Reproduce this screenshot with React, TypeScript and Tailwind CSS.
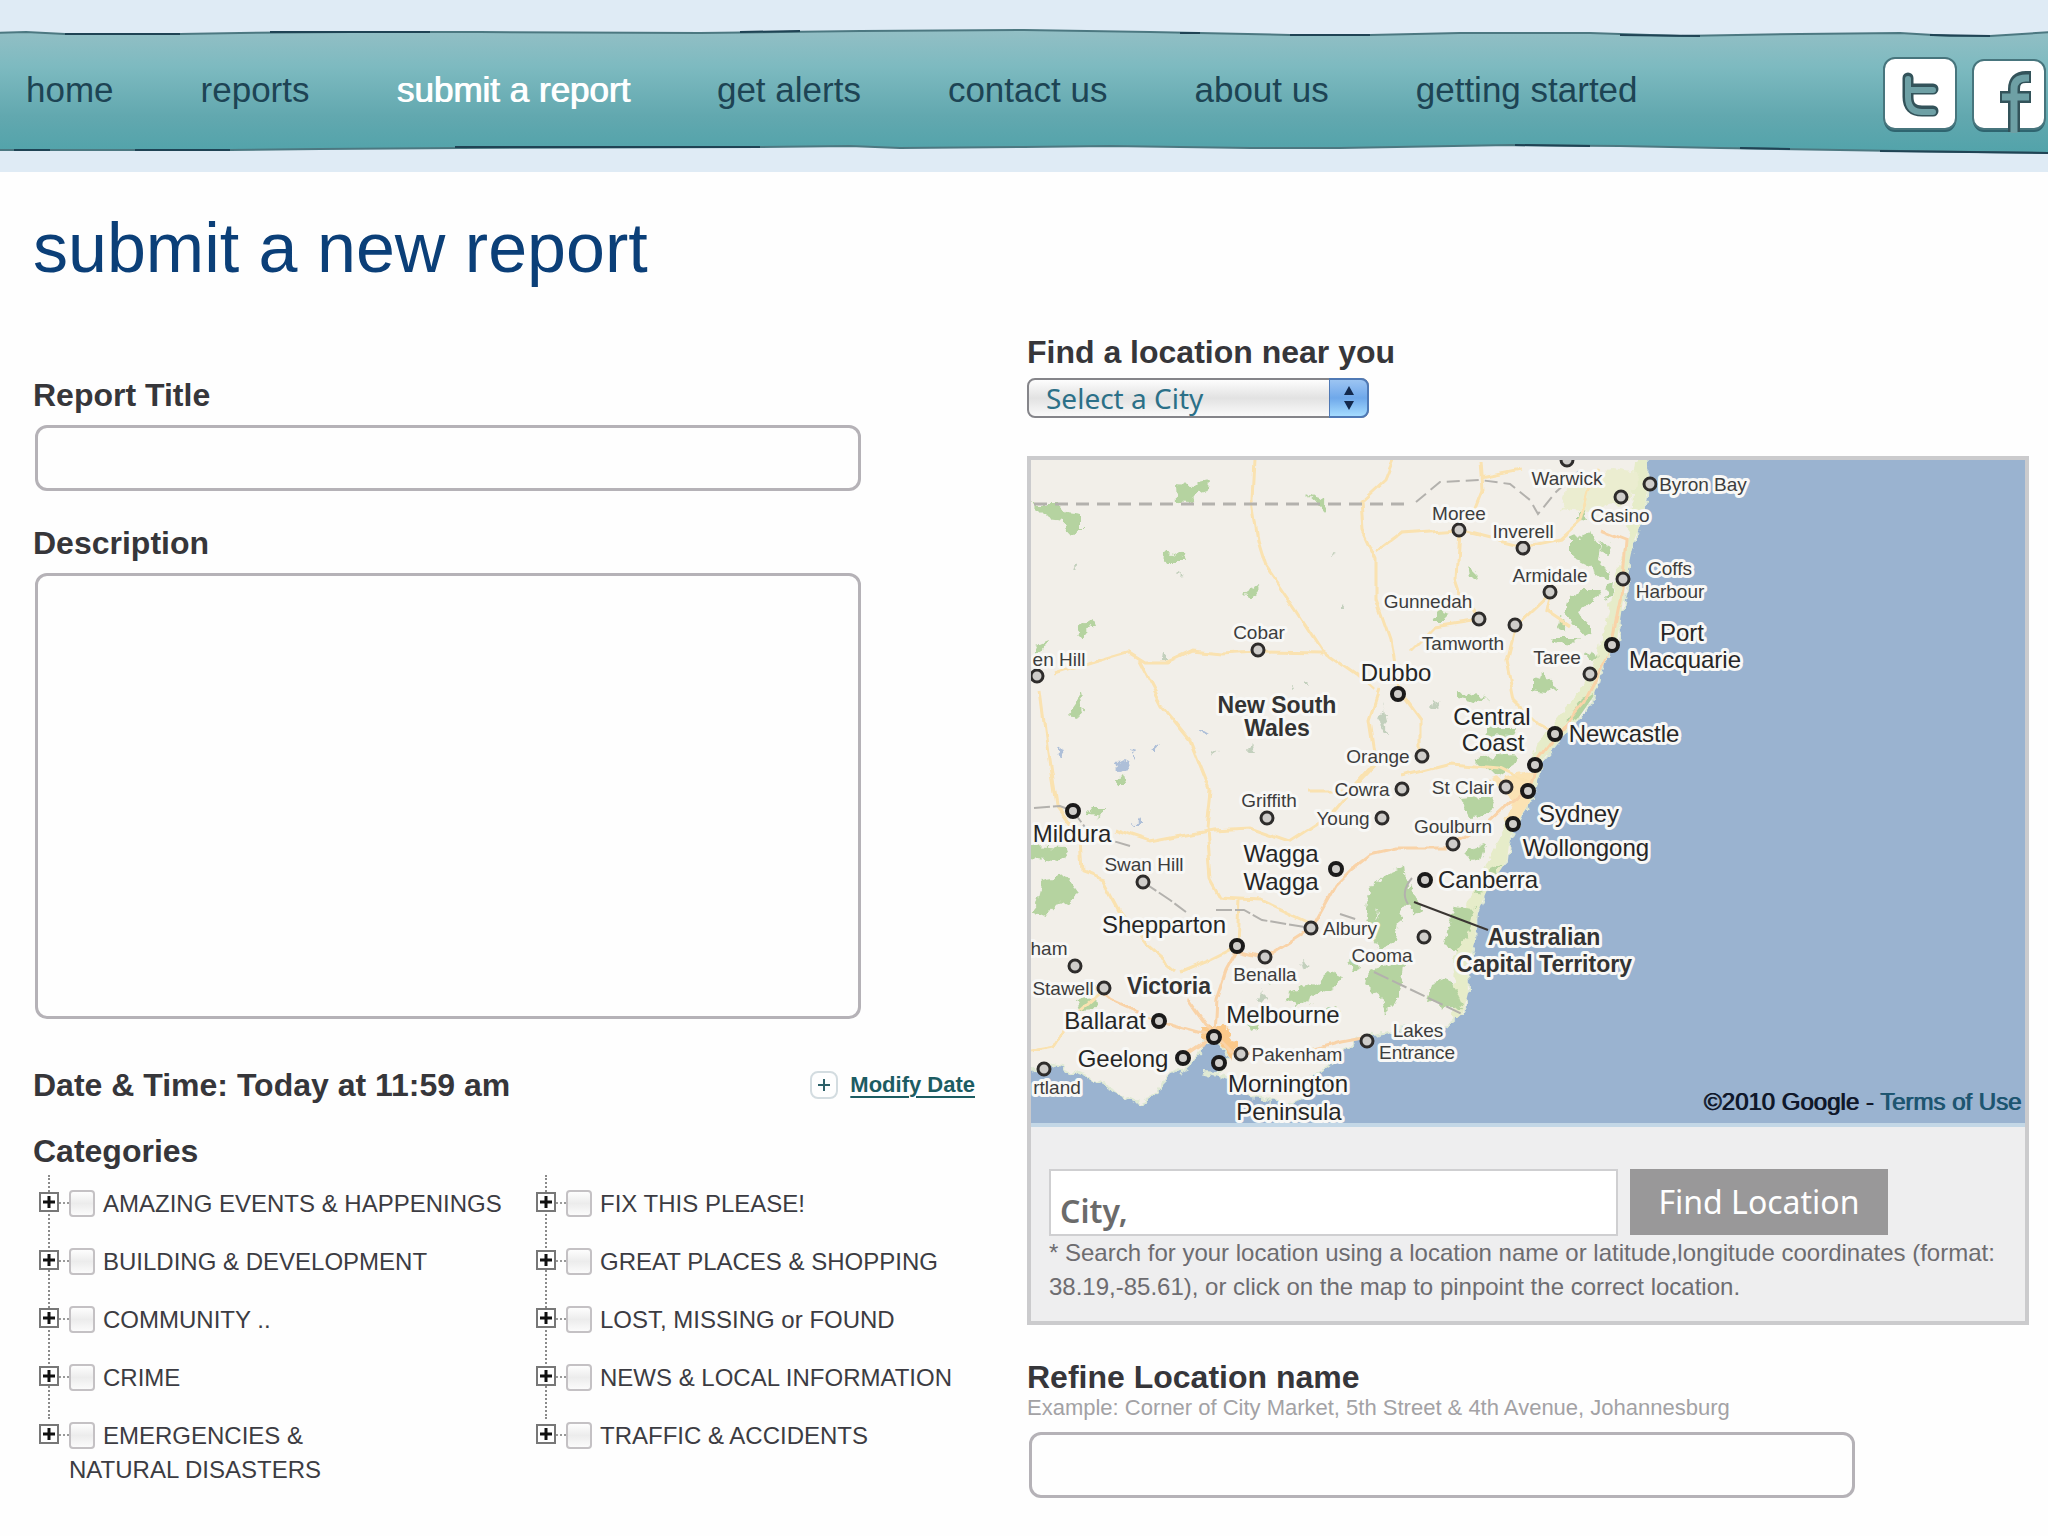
import { useState } from "react";

const NAV_ITEMS = [
  "home",
  "reports",
  "submit a report",
  "get alerts",
  "contact us",
  "about us",
  "getting started",
];

const CATEGORIES = [
  [
    "AMAZING EVENTS & HAPPENINGS",
    "BUILDING & DEVELOPMENT",
    "COMMUNITY ..",
    "CRIME",
    "EMERGENCIES &\nNATURAL DISASTERS",
  ],
  [
    "FIX THIS PLEASE!",
    "GREAT PLACES & SHOPPING",
    "LOST, MISSING or FOUND",
    "NEWS & LOCAL INFORMATION",
    "TRAFFIC & ACCIDENTS",
  ],
];

type Place = [name: string, x: number, y: number];

const TOWNS: Place[] = [
  ["Warwick", 1567, 485],
  ["Casino", 1620, 522],
  ["Byron Bay", 1703, 491],
  ["Moree", 1459, 520],
  ["Inverell", 1523, 538],
  ["Coffs", 1670, 575],
  ["Harbour", 1670, 598],
  ["Armidale", 1550, 582],
  ["Gunnedah", 1428, 608],
  ["Tamworth", 1463, 650],
  ["Taree", 1557, 664],
  ["Cobar", 1259, 639],
  ["en Hill", 1059, 666],
  ["Orange", 1378, 763],
  ["St Clair", 1463, 794],
  ["Cowra", 1362, 796],
  ["Griffith", 1269, 807],
  ["Young", 1343, 825],
  ["Goulburn", 1453, 833],
  ["Swan Hill", 1144, 871],
  ["Albury", 1350, 935],
  ["Cooma", 1382, 962],
  ["ham", 1049, 955],
  ["Benalla", 1265, 981],
  ["Stawell", 1063, 995],
  ["Pakenham", 1297, 1061],
  ["Lakes", 1418, 1037],
  ["Entrance", 1417, 1059],
  ["rtland", 1057, 1094],
];

const CITIES: Place[] = [
  ["Port", 1682, 641],
  ["Macquarie", 1685, 668],
  ["Dubbo", 1396, 681],
  ["Central", 1492, 725],
  ["Coast", 1493, 751],
  ["Newcastle", 1624, 742],
  ["Sydney", 1579, 822],
  ["Wollongong", 1586, 856],
  ["Mildura", 1072, 842],
  ["Wagga", 1281, 862],
  ["Wagga", 1281, 890],
  ["Canberra", 1488, 888],
  ["Shepparton", 1164, 933],
  ["Ballarat", 1105, 1029],
  ["Melbourne", 1283, 1023],
  ["Geelong", 1123, 1067],
  ["Mornington", 1288, 1092],
  ["Peninsula", 1289, 1120],
];

const STATES: Place[] = [
  ["New South", 1277, 713],
  ["Wales", 1277, 736],
  ["Australian", 1544, 945],
  ["Capital Territory", 1544, 972],
  ["Victoria", 1169, 994],
];

const TOWN_DOTS = [
  [1567, 460], [1621, 497], [1650, 484], [1459, 530], [1523, 548], [1623, 579],
  [1550, 592], [1479, 619], [1515, 625], [1590, 674], [1258, 650], [1037, 676],
  [1422, 756], [1402, 789], [1506, 787], [1382, 818], [1267, 818], [1453, 844],
  [1143, 882], [1311, 928], [1424, 937], [1075, 966], [1265, 957], [1104, 988],
  [1367, 1041], [1241, 1054], [1044, 1069],
];

const CITY_DOTS = [
  [1612, 645], [1398, 694], [1555, 734], [1535, 765], [1528, 791], [1513, 824],
  [1073, 811], [1336, 869], [1425, 880], [1237, 946], [1159, 1021], [1214, 1037],
  [1183, 1058], [1219, 1063],
];

const COAST =
  "M1020 450H1646L1648 483L1643 517L1633 543L1627 573L1622 607L1617 640L1602 667L1593 697L1577 720L1560 740L1542 760L1533 797L1523 812L1510 837L1507 860L1487 890L1477 913L1475 940L1467 967L1468 993L1463 1013L1447 1027L1410 1029L1367 1037L1353 1043L1333 1063L1310 1080L1306 1098L1287 1103L1253 1097L1233 1080L1203 1072L1220 1073L1228 1057L1217 1040L1207 1043L1200 1053L1187 1067L1163 1080L1157 1093L1140 1103L1120 1093L1087 1077L1063 1068L1047 1063L1020 1073Z";

const PARKS = [
  "M1031 503L1060 503L1066 512L1080 514L1080 532L1066 531L1062 520L1046 518Z",
  "M1175 485L1196 486L1200 482L1209 480L1208 488L1198 491L1190 503L1176 502Z",
  "M1160 551L1183 555L1186 563L1170 563Z",
  "M1244 594L1256 586L1257 592L1248 598Z",
  "M1307 494L1324 500L1325 512L1318 504Z",
  "M1076 629L1092 619L1094 624L1083 638Z",
  "M1036 646L1048 641L1046 646L1036 652Z",
  "M1066 716L1080 696L1084 712L1070 718Z",
  "M1116 778L1124 776L1126 785L1117 785Z",
  "M1031 845L1065 847L1067 856L1052 861L1031 858Z",
  "M1042 880L1066 876L1078 893L1068 902L1056 905L1046 917L1034 912Z",
  "M1088 808L1106 808L1104 818L1090 816Z",
  "M1076 1000L1096 998L1098 1008L1080 1009Z",
  "M1572 540L1590 532L1600 545L1598 562L1612 570L1606 580L1588 566L1572 558Z",
  "M1584 590L1600 590L1592 604L1580 612L1586 622L1594 632L1584 638L1576 628L1564 614L1568 600Z",
  "M1552 638L1580 638L1572 646L1558 644Z",
  "M1532 680L1544 672L1548 682L1560 690L1546 692L1532 690Z",
  "M1460 692L1490 700L1478 702L1460 698Z",
  "M1582 700L1594 692L1590 708L1578 716L1566 722Z",
  "M1438 610L1450 614L1444 620L1432 620Z",
  "M1468 565L1478 575L1476 582L1470 576Z",
  "M1484 728L1516 728L1512 736L1486 735Z",
  "M1472 760L1498 754L1518 756L1514 766L1498 776L1480 768Z",
  "M1460 799L1494 796L1490 814L1468 815Z",
  "M1464 850L1486 842L1482 862L1470 864Z",
  "M1382 875L1404 866L1406 884L1418 902L1402 908L1396 940L1382 950L1372 936L1378 912L1366 894Z",
  "M1406 890L1412 884L1424 914L1412 910Z",
  "M1456 906L1476 908L1470 930L1456 952L1444 944L1448 926Z",
  "M1368 972L1404 960L1402 986L1396 1002L1384 1014L1380 994L1366 984Z",
  "M1288 990L1316 984L1330 972L1342 978L1334 988L1314 996L1300 1006L1286 1000Z",
  "M1432 984L1448 978L1456 990L1462 1006L1444 1008L1428 1000Z",
  "M1370 890L1380 884L1374 932L1366 918Z",
  "M1488 870L1504 862L1484 894L1476 892Z",
  "M1578 514L1584 510L1586 522L1578 520Z",
  "M1602 540L1610 544L1608 554L1600 550Z",
  "M1606 588L1614 584L1612 596L1604 598Z",
  "M1560 620L1568 624L1566 632L1558 628Z",
  "M1590 650L1600 656L1594 660L1586 656Z",
  "M1326 1008L1336 1004L1342 1012L1330 1016Z",
  "M1258 976L1266 974L1270 984L1260 986Z",
  "M1350 964L1358 958L1362 968L1352 972Z",
  "M1246 1024L1256 1022L1258 1030L1248 1032Z",
];

const ROADS =
  "M1254 460L1252 500L1258 540L1266 566L1296 610L1322 650L1356 674L1374 690" +
  "M1056 674L1090 663L1128 652L1144 662L1168 662L1192 651L1222 654L1258 652L1322 653" +
  "M1138 660L1162 706L1190 740L1210 790L1206 828L1210 880L1220 898L1240 900L1238 946L1210 960L1180 972" +
  "M1040 690L1048 754L1056 806L1080 838L1082 872L1104 880L1120 910L1146 944L1176 970" +
  "M1114 830L1150 842L1212 830L1250 828L1290 842L1330 816L1350 792L1380 760" +
  "M1220 898L1260 900L1311 924M1031 1050L1054 1046L1070 1020L1104 990" +
  "M1392 460L1384 480L1360 502L1362 530L1376 560L1376 600L1390 640L1398 690L1420 720L1420 756" +
  "M1376 552L1400 534L1430 532L1459 530L1456 580L1460 592L1479 619L1434 626L1410 650" +
  "M1459 530L1523 546L1560 538L1580 520L1588 490L1600 470M1480 460L1482 490L1470 520M1480 478L1520 470" +
  "M1515 625L1550 592L1546 610L1570 626M1515 625L1506 660L1514 700L1540 726L1555 734" +
  "M1380 690L1370 720L1376 760L1350 790L1310 790M1402 776L1450 764L1500 768L1528 782";

const FREEWAYS =
  "M1214 1037L1216 1000L1226 970L1237 950L1265 957L1311 928L1334 886L1352 868L1370 854L1396 848L1446 848L1490 822L1514 800L1528 790L1538 760L1556 736L1584 702L1610 650L1622 590L1626 540L1600 530" +
  "M1214 1037L1160 1022L1110 1000L1090 984M1214 1037L1186 998M1214 1037L1183 1058M1220 1040L1232 1052L1290 1056L1340 1042L1367 1037";

function BrushedBand() {
  return (
    <svg
      className="absolute inset-0 h-full w-full"
      viewBox="0 0 2048 172"
      preserveAspectRatio="none"
      aria-hidden="true"
    >
      <defs>
        <linearGradient id="band" x1="0" y1="0" x2="0" y2="1">
          <stop offset="0" stopColor="#93bfc5" />
          <stop offset="0.3" stopColor="#7dbac0" />
          <stop offset="0.7" stopColor="#62a8af" />
          <stop offset="1" stopColor="#52a3aa" />
        </linearGradient>
      </defs>
      <path
        d="M-4 33L26 32L65 34L180 34L240 33L350 32L480 32L700 33L860 31L1024 30L1150 32L1290 35L1370 35L1460 33L1590 33L1680 36L1800 34L1900 33L1950 36L1990 36L2052 32V153L1900 151L1720 148L1620 146L1510 145L1340 148L1250 148L1110 146L1024 147L900 148L850 146L760 147L460 148L320 149L230 150L-4 150Z"
        fill="url(#band)"
        stroke="#4c7881"
        strokeWidth="2"
      />
      <path
        d="M65 34L180 34M270 32L430 32M740 32L800 31M1180 33L1200 33M1290 35L1370 35M1620 35L1700 36M1930 35L1990 36M14 150L50 150M135 150L230 150M455 147L760 147M1515 145L1590 146M1740 148L1790 149M1880 151L2048 153"
        fill="none"
        stroke="#1f4354"
        strokeWidth="2"
      />
    </svg>
  );
}

function TwitterIcon() {
  return (
    <svg className="h-[78px] w-[76px]" viewBox="0 0 76 78" aria-hidden="true">
      <rect x="2" y="5" width="72" height="72" rx="11" fill="#2f6570" />
      <rect x="2" y="3" width="72" height="71" rx="11" fill="#fff" stroke="#47757d" strokeWidth="2" />
      <g fill="none" strokeLinecap="round">
        <path d="M26 23V42Q26 56 40 56H51M26 34H51" stroke="#33535a" strokeWidth="11" />
        <path d="M26 24V42Q26 57 40 57H51M26 35H51" stroke="#6ea0a5" strokeWidth="6" />
      </g>
    </svg>
  );
}

function FacebookIcon() {
  return (
    <svg className="h-[78px] w-[76px]" viewBox="0 0 76 78" aria-hidden="true">
      <rect x="2" y="7" width="72" height="70" rx="11" fill="#2f6570" />
      <rect x="2" y="5" width="72" height="69" rx="11" fill="#fff" stroke="#47757d" strokeWidth="2" />
      <g fill="none">
        <path d="M43 77V34Q43 22 55 22H60M29 42H60" stroke="#33535a" strokeWidth="12" />
        <path d="M43 78V34Q43 23 55 23H58M31 42H58" stroke="#6ea0a5" strokeWidth="7" />
      </g>
    </svg>
  );
}

function PlaceLabels({ places, className }: { places: Place[]; className: string }) {
  return (
    <g className={className}>
      {places.map(([name, x, y]) => (
        <text key={`${name}-${y}`} x={x} y={y} textAnchor="middle">
          {name}
        </text>
      ))}
    </g>
  );
}

function RegionMap() {
  return (
    <div className="relative">
      <svg
        className="block h-auto w-full bg-[#9ab3d0]"
        viewBox="1031 460 994 667"
        role="img"
        aria-label="Map of New South Wales"
      >
        <defs>
          <filter id="ragged" x="-5%" y="-5%" width="110%" height="110%">
            <feTurbulence type="fractalNoise" baseFrequency="0.09" numOctaves="3" seed="4" />
            <feDisplacementMap in="SourceGraphic" scale="13" xChannelSelector="R" yChannelSelector="G" />
          </filter>
          <filter id="bend" x="-5%" y="-5%" width="110%" height="110%">
            <feTurbulence type="fractalNoise" baseFrequency="0.04" numOctaves="2" seed="9" />
            <feDisplacementMap in="SourceGraphic" scale="9" xChannelSelector="R" yChannelSelector="G" />
          </filter>
          <clipPath id="land">
            <path d={COAST} />
          </clipPath>
        </defs>

        <path d={COAST} fill="#f2efe9" stroke="#dfe9d4" strokeWidth="2" filter="url(#ragged)" />
        <g clipPath="url(#land)">
          <g filter="url(#ragged)">
            <path
              d="M1646 460L1640 530L1622 600L1606 660L1586 700L1545 750L1528 800L1505 850L1480 900L1464 960L1462 1020"
              fill="none"
              stroke="#e6ecc9"
              strokeWidth="20"
            />
            <path d="M1570 480L1610 470L1640 474L1630 500L1590 512L1560 508Z" fill="#ebedd0" />
            <path d={PARKS.join("")} fill="#b5d3a0" />
            <path
              d="M1118 764L1126 760L1128 770L1120 772ZM1130 750L1137 752L1134 756ZM1148 752L1160 744L1156 752ZM1198 728L1208 734L1204 736ZM1055 746L1066 750L1060 758ZM1138 818L1142 824L1134 824Z"
              fill="#aebfd8"
            />
            <path
              d="M1072 566L1076 568L1070 570ZM1180 572L1184 574L1178 575ZM1332 552L1336 554L1330 556ZM1342 602L1345 606L1340 606ZM1163 652L1168 660L1162 660ZM1250 742L1256 752L1248 752ZM1210 750L1220 752L1212 756ZM1290 684L1294 686L1290 688ZM1304 682L1308 686L1304 686ZM1300 962L1310 966L1302 970ZM1262 990L1270 998L1258 1000ZM1384 706L1388 736L1380 722ZM1432 700L1440 704L1430 708Z"
              fill="#c3d0bd"
            />
          </g>
          <path d="M1490 780L1532 770L1528 812L1506 830L1512 800Z" fill="#fbe3b4" filter="url(#ragged)" />
          <path d="M1202 1026L1222 1024L1236 1044L1230 1062L1220 1042L1204 1040Z" fill="#fbc98a" filter="url(#ragged)" />
          <g fill="none" filter="url(#bend)">
            <path d={ROADS} stroke="#fae2b0" strokeWidth="3" />
            <path d={FREEWAYS} stroke="#f9d3a8" strokeWidth="3" />
          </g>
          <g fill="none" stroke="#b3b1ad" strokeWidth="3">
            <path d="M1034 504H1412" strokeDasharray="13 8" />
            <path d="M1416 502L1440 482L1480 480L1510 484L1530 500L1538 514L1556 492L1580 470" strokeWidth="2" strokeDasharray="13 6" />
            <path d="M1034 808L1060 806L1073 811L1090 834L1130 846M1143 882L1170 900L1186 912M1216 910L1244 910L1262 920L1311 928M1340 914L1358 920" strokeWidth="2" strokeDasharray="16 3" />
            <path d="M1374 972L1462 1014" strokeWidth="2" strokeDasharray="16 4" />
            <path d="M1412 878Q1400 892 1408 904" strokeWidth="2" />
          </g>
        </g>
        <path d="M1414 902L1488 930" stroke="#3b3633" strokeWidth="2" />
        <path d="M1031 1125H2025" stroke="#c3d7e6" strokeWidth="4" />

        <g fill="#cfcdca" stroke="#2e2c2b">
          {TOWN_DOTS.map(([x, y]) => (
            <circle key={`${x}-${y}`} cx={x} cy={y} r="6" strokeWidth="3" />
          ))}
          {CITY_DOTS.map(([x, y]) => (
            <circle key={`${x}-${y}`} cx={x} cy={y} r="6" strokeWidth="4" stroke="#1b1a1a" />
          ))}
        </g>

        <g stroke="#f8f8f6" strokeWidth="6" strokeLinejoin="round" paintOrder="stroke">
          <PlaceLabels places={TOWNS} className="fill-[#3d3d3d] text-[19px]" />
          <PlaceLabels places={CITIES} className="fill-[#262626] text-[24px]" />
          <PlaceLabels places={STATES} className="fill-[#333333] text-[23px] font-bold" />
        </g>
      </svg>
      <p className="absolute right-1 bottom-2 text-[24px] leading-[34px] text-[#10182a] [text-shadow:1px_0_0_currentColor]">
        ©2010 Google -{" "}
        <a href="#terms" className="text-[#1d5570]">
          Terms of Use
        </a>
      </p>
    </div>
  );
}

function CategoryColumn({ items }: { items: string[] }) {
  return (
    <ul className="relative flex flex-col gap-6">
      <li
        aria-hidden="true"
        className="absolute -top-3 left-[15px] h-[244px] border-l-2 border-dotted border-[#8a8a8a]"
      />
      {items.map((item) => (
        <li key={item} className="relative flex items-start pl-[6px]">
          <button
            type="button"
            aria-label={`Expand ${item}`}
            className="mt-[5px] flex size-5 shrink-0 items-center justify-center border-2 border-[#777777] bg-white"
          >
            <svg className="size-3" viewBox="0 0 12 12" aria-hidden="true">
              <path d="M6 0V12M0 6H12" stroke="#111" strokeWidth="3" />
            </svg>
          </button>
          <span className="mt-[15px] w-[10px] shrink-0 border-t-2 border-dotted border-[#999999]" />
          <label className="text-[24px] leading-[34px] whitespace-pre-line text-[#3c3c42]">
            <input
              type="checkbox"
              className="mr-[8px] inline-block h-[27px] w-[26px] appearance-none rounded-[4px] border-2 border-[#c4c1c4] bg-linear-to-b from-[#fdfdfd] via-[#ececec] to-[#fbfbfb] align-[-5px] checked:bg-[#6a9fe0]"
            />
            {item}
          </label>
        </li>
      ))}
    </ul>
  );
}

const labelClass = "block text-[32px] leading-9 font-bold text-[#36363a]";
const fieldClass =
  "block w-full max-w-[826px] rounded-[12px] border-[3px] border-[#b5b2b7] bg-[#fefefe] px-4 text-[24px] text-[#3c3c42] outline-none";

export default function App() {
  const [title, setTitle] = useState("");
  const [description, setDescription] = useState("");
  const [city, setCity] = useState("");
  const [search, setSearch] = useState("City,");
  const [locationName, setLocationName] = useState("");

  return (
    <div className="min-h-screen bg-[#fefefe] font-['Liberation_Sans',Arial,sans-serif]">
      <header className="relative h-[172px] overflow-hidden bg-[#dfebf5]">
        <BrushedBand />
        <div className="relative flex items-start justify-between pt-[55px] pr-px pl-[26px]">
          <nav className="flex gap-[87px] text-[35px] leading-[70px] whitespace-nowrap text-[#1d4454]">
            {NAV_ITEMS.map((item) => (
              <a
                key={item}
                href={`#${item.replace(/ /g, "-")}`}
                className={
                  item === "submit a report"
                    ? "text-white [text-shadow:1px_0_0_currentColor]"
                    : undefined
                }
              >
                {item}
              </a>
            ))}
          </nav>
          <div className="flex shrink-0 gap-[13px]">
            <a href="#twitter" aria-label="Twitter">
              <TwitterIcon />
            </a>
            <a href="#facebook" aria-label="Facebook">
              <FacebookIcon />
            </a>
          </div>
        </div>
      </header>

      <main className="pt-[34px] pr-[19px] pb-8 pl-[33px]">
        <h1 className="text-[70px] leading-[84px] text-[#0b3f78]">submit a new report</h1>

        <form
          className="grid grid-cols-[minmax(0,994fr)_minmax(0,1002fr)]"
          onSubmit={(e) => e.preventDefault()}
        >
          <div className="pt-[87px] pr-[52px]">
            <label htmlFor="title" className={labelClass}>
              Report Title
            </label>
            <input
              id="title"
              value={title}
              onChange={(e) => setTitle(e.target.value)}
              className={`${fieldClass} mt-3 ml-[2px] h-[66px]`}
            />

            <label htmlFor="description" className={`${labelClass} mt-[34px]`}>
              Description
            </label>
            <textarea
              id="description"
              value={description}
              onChange={(e) => setDescription(e.target.value)}
              className={`${fieldClass} mt-3 ml-[2px] h-[446px] resize-none`}
            />

            <div className="mt-12 flex items-center justify-between">
              <p className={labelClass}>Date &amp; Time: Today at 11:59 am</p>
              <a
                href="#modify-date"
                className="flex items-center gap-3 text-[22px] leading-9 font-bold text-[#1c5c62]"
              >
                <span className="flex size-7 items-center justify-center rounded-[8px] border-2 border-[#d3dce0]">
                  <svg className="size-3" viewBox="0 0 12 12" aria-hidden="true">
                    <path d="M6 0V12M0 6H12" stroke="#2d6068" strokeWidth="2" />
                  </svg>
                </span>
                <span className="underline decoration-2 underline-offset-4">Modify Date</span>
              </a>
            </div>

            <h2 className={`${labelClass} mt-[30px]`}>Categories</h2>
            <div className="mt-[18px] grid grid-cols-[497px_1fr]">
              {CATEGORIES.map((items) => (
                <CategoryColumn key={items[0]} items={items} />
              ))}
            </div>
          </div>

          <div className="pt-[44px]">
            <label htmlFor="city" className={labelClass}>
              Find a location near you
            </label>
            <div className="relative mt-2 w-[342px]">
              <select
                id="city"
                value={city}
                onChange={(e) => setCity(e.target.value)}
                className="block h-10 w-full appearance-none rounded-[8px] border-2 border-[#85858a] bg-linear-to-b from-[#fdfdfd] via-[#e2e2e2] to-[#fafafa] pl-[17px] font-['Noto_Sans',sans-serif] text-[28px] leading-9 text-[#2b7088]"
              >
                <option value="">Select a City</option>
                <option value="sydney">Sydney</option>
                <option value="newcastle">Newcastle</option>
                <option value="canberra">Canberra</option>
              </select>
              <span className="pointer-events-none absolute inset-y-0 right-0 flex w-10 items-center justify-center rounded-r-[8px] border-2 border-l border-[#4f79b5] bg-linear-to-b from-[#9cc4f2] via-[#6fa8ea] to-[#a5dcff]">
                <svg className="h-6 w-3" viewBox="0 0 12 24" fill="#13294d" aria-hidden="true">
                  <path d="M6 0L11 9H1ZM6 24L11 15H1Z" />
                </svg>
              </span>
            </div>

            <section className="mt-[38px] border-4 border-[#cbcbcd] bg-[#eeeeef]">
              <RegionMap />
              <div className="px-[18px] pt-[42px] pb-[17px]">
                <div className="flex gap-3">
                  <input
                    aria-label="City"
                    value={search}
                    onChange={(e) => setSearch(e.target.value)}
                    className="h-[67px] w-[569px] border-2 border-[#cfcfd1] bg-white pt-4 pl-[9px] font-['Noto_Sans',sans-serif] text-[32px] font-semibold text-[#6b6b6b] outline-none"
                  />
                  <button
                    type="button"
                    className="h-[66px] w-[258px] bg-[#999899] font-['Noto_Sans',sans-serif] text-[32px] text-white"
                  >
                    Find Location
                  </button>
                </div>
                <p className="text-[24px] leading-[34px] text-[#6d6c70]">
                  * Search for your location using a location name or latitude,longitude
                  coordinates (format: 38.19,-85.61), or click on the map to pinpoint the correct
                  location.
                </p>
              </div>
            </section>

            <label htmlFor="location-name" className={`${labelClass} mt-[34px]`}>
              Refine Location name
            </label>
            <p className="text-[22px] leading-[26px] text-[#a3a2a5]">
              Example: Corner of City Market, 5th Street &amp; 4th Avenue, Johannesburg
            </p>
            <input
              id="location-name"
              value={locationName}
              onChange={(e) => setLocationName(e.target.value)}
              className={`${fieldClass} mt-[11px] ml-[2px] h-[66px]`}
            />
          </div>
        </form>
      </main>
    </div>
  );
}
